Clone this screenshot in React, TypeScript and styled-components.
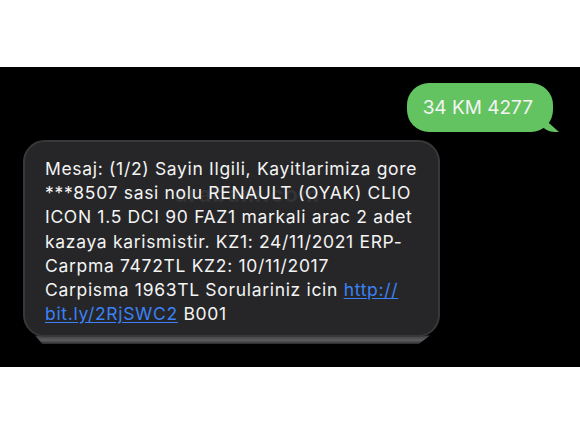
import * as React from 'react';
import styled, { createGlobalStyle } from 'styled-components';

const GlobalStyle = createGlobalStyle`
  html, body {
    margin: 0;
    padding: 0;
    background: #ffffff;
  }
  body {
    font-family: Inter, "Liberation Sans", Arial, sans-serif;
    width: 580px;
    height: 435px;
    overflow: hidden;
  }
`;

const Page = styled.div`
  padding-top: 67px;
`;

// dark chat thread area
const Thread = styled.div`
  height: 300px;
  background: #000;
  display: flex;
  flex-direction: column;
  padding: 16px 27px 0 23px;
  box-sizing: border-box;
  gap: 8px;
  isolation: isolate;
`;

const Bubble = styled.div<{ $mine?: boolean }>`
  position: relative;
  border-radius: 22px;
  font-size: ${p => (p.$mine ? '19px' : '17.5px')};
  letter-spacing: ${p => (p.$mine ? '0' : '0.68px')};
  color: #f4f4f4;
`;

const Outgoing = styled(Bubble)`
  align-self: flex-end;
  background: #63c360;
  height: 49px;
  padding: 0 20px 0 16px;
  display: flex;
  align-items: center;

  &::after {
    content: '';
    position: absolute;
    right: -6px;
    bottom: 0;
    width: 18px;
    height: 16px;
    background: #63c360;
    border-bottom-left-radius: 14px 10px;
    clip-path: polygon(0 0, 100% 100%, 0 100%);
  }
`;

const Incoming = styled(Bubble)`
  align-self: flex-start;
  width: 417px;
  box-sizing: border-box;
  background: #262628;
  border: 2px solid #38383a;
  padding: 15px 8px 9px 20px;
  line-height: 24.2px;

  /* lighter strip peeking out under the bubble */
  &::after {
    content: '';
    position: absolute;
    left: 10px;
    right: 8px;
    bottom: -9px;
    height: 9px;
    background: linear-gradient(#3a3a3c, #5c5c5e 60%, #2a2a2c);
    clip-path: polygon(0 0, 100% 0, 97% 100%, 2% 100%);
    z-index: -1;
  }
`;

const Body = styled.div`
  position: relative;
  z-index: 1;
`;

const Mark = styled.span`
  position: absolute;
  left: 150px;
  top: 40px;
  font-size: 22px;
  font-weight: 700;
  letter-spacing: 1px;
  color: rgba(255, 255, 255, 0.07);
  pointer-events: none;
`;

const Link = styled.a`
  color: #3b82f6;
  text-decoration: underline;
  text-underline-offset: 2px;
`;

export default function App() {
  return (
    <>
      <GlobalStyle />
      <Page>
        <Thread>
          <Outgoing $mine>34 KM 4277</Outgoing>
          <Incoming>
            <Mark>arabam.com</Mark>
            <Body>
              Mesaj: (1/2) Sayin Ilgili, Kayitlarimiza gore<br />
              ***8507 sasi nolu RENAULT (OYAK) CLIO<br />
              ICON 1.5 DCI 90 FAZ1 markali arac 2 adet<br />
              kazaya karismistir. KZ1: 24/11/2021 ERP-<br />
              Carpma 7472TL KZ2: 10/11/2017<br />
              Carpisma 1963TL Sorulariniz icin <Link>http://</Link><br />
              <Link>bit.ly/2RjSWC2</Link> B001
            </Body>
          </Incoming>
        </Thread>
      </Page>
    </>
  );
}
